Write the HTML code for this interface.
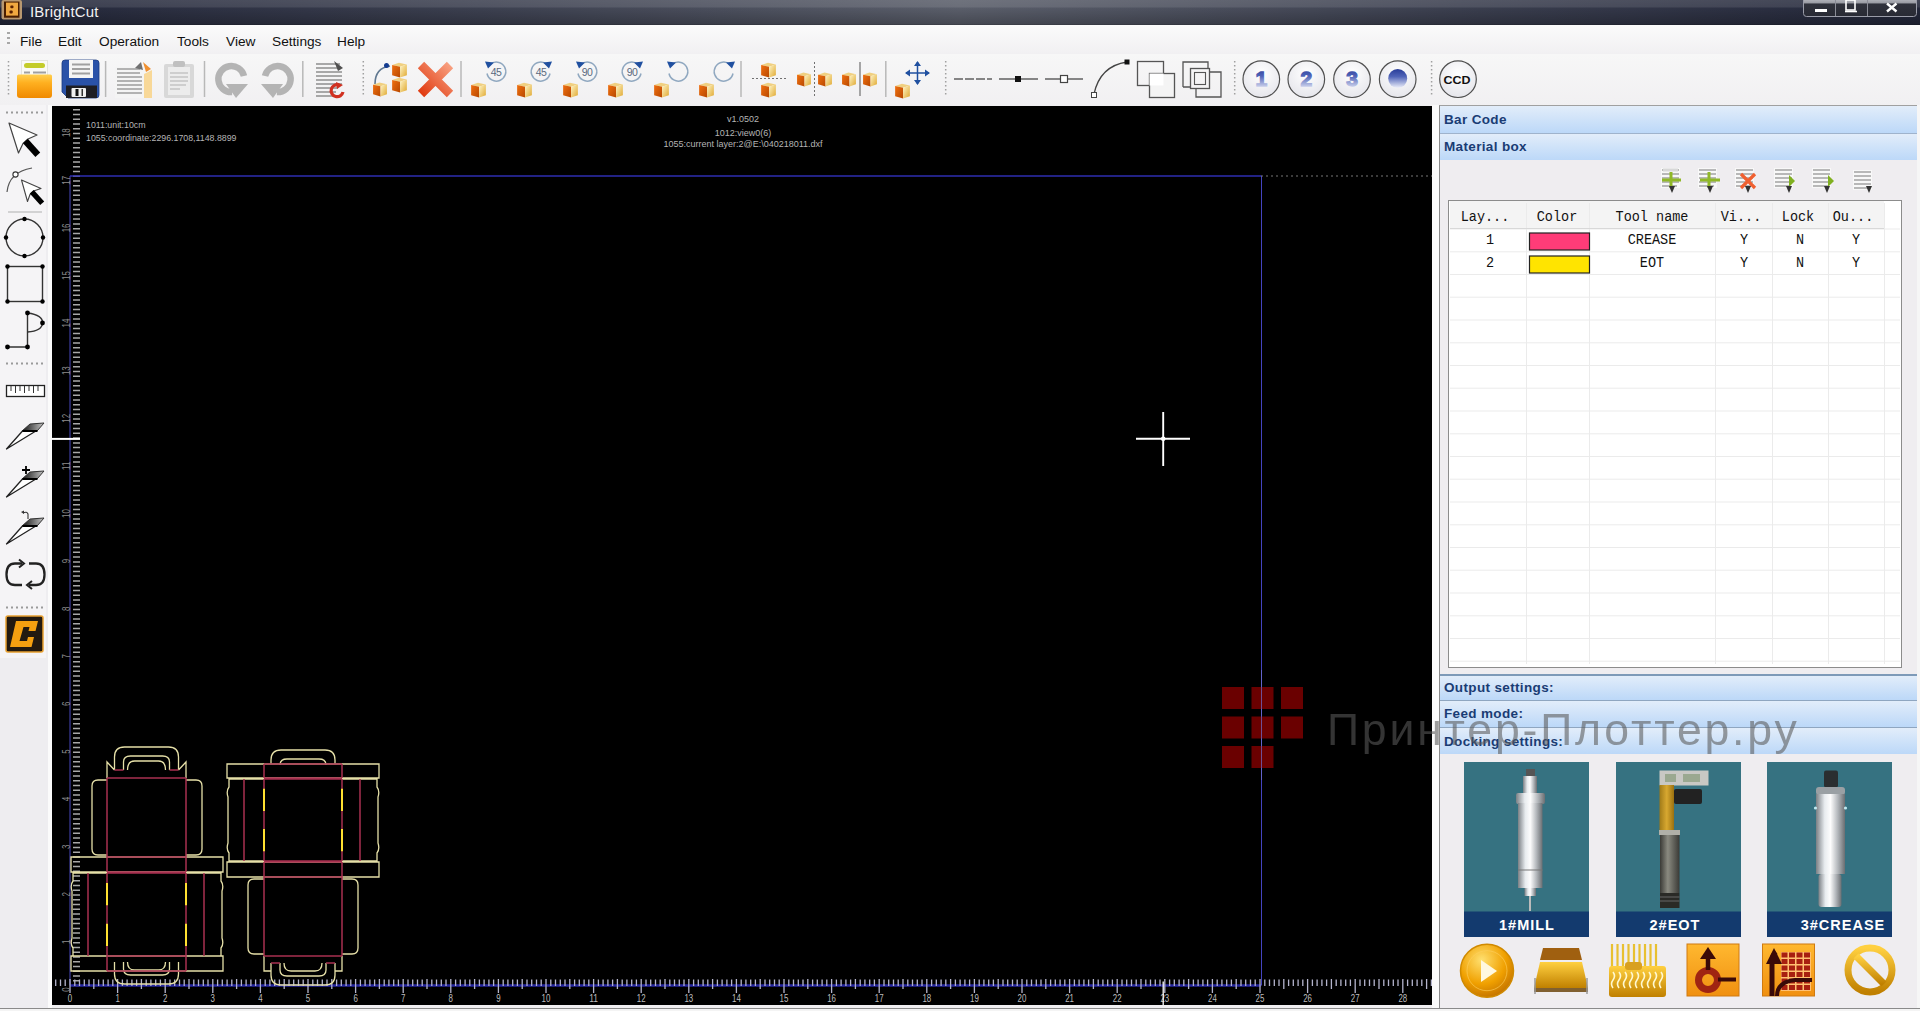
<!DOCTYPE html><html><head><meta charset="utf-8"><style>
*{box-sizing:border-box}
html,body{margin:0;padding:0;width:1920px;height:1011px;overflow:hidden;background:#f0eff1;font-family:"Liberation Sans", sans-serif}
.abs{position:absolute}
#title{left:0;top:0;width:1920px;height:25px;background:linear-gradient(rgba(255,255,255,0.13),rgba(255,255,255,0.10) 7px,rgba(0,0,0,0) 8px,rgba(0,0,0,0.22) 24px,rgba(0,0,0,0.4) 25px),linear-gradient(to right,#23273a,#3c4050 25%,#5a5e6a 50%,#3c4050 75%,#23273a)}
#menu{left:0;top:25px;width:1920px;height:29px;background:linear-gradient(#fbfbfb,#f1f0f2)}
#menu span{position:absolute;top:8.5px;font-size:13.7px;color:#111}
#tb{left:0;top:54px;width:1920px;height:51px;background:linear-gradient(#f7f7f7,#f1f0f2)}
#left{left:0;top:105px;width:48px;height:903px;background:#eeedf0}
#canvas{left:52px;top:106px;width:1380px;height:899px;background:#000}
#rp{left:1439px;top:105px;width:478px;height:903px;background:#efedf0;border-left:1px solid #8a8a8a;border-top:1px solid #a0a0a0}
.hdr{position:absolute;left:0;width:477px;background:linear-gradient(#e2edfa,#bcd8f8);font-weight:bold;color:#1a3c74;font-size:13.5px;letter-spacing:0.35px;padding-left:4px}
</style></head><body>

<div id="title" class="abs"></div>
<svg class="abs" style="left:0;top:0" width="1920" height="26" viewBox="0 0 1920 26"><defs><linearGradient id="gWb" x1="0" y1="0" x2="0" y2="1"><stop offset="0" stop-color="#c4c6cc"/><stop offset="0.3" stop-color="#9a9ca4"/><stop offset="0.36" stop-color="#30323c"/><stop offset="1" stop-color="#282a34"/></linearGradient></defs><rect x="1.5" y="0" width="20.5" height="19.5" rx="2" fill="#b89870"/><rect x="4" y="1.5" width="15.5" height="16.2" fill="#4a1e00"/><rect x="6" y="2.6" width="12" height="13" fill="#f0a840"/><rect x="10.3" y="5.5" width="3.2" height="2.8" rx="1" fill="#5a2000"/><rect x="9.5" y="10.6" width="3.2" height="2.8" rx="1" fill="#5a2000"/><text x="30" y="16.8" font-family="Liberation Sans" font-size="15" fill="#f2f2f2" letter-spacing="0.2">IBrightCut</text><rect x="1803.5" y="-3" width="113" height="19.5" rx="3" fill="url(#gWb)" stroke="#9a9ca8" stroke-width="1"/><path d="M1835.5 0V16M1867.5 0V16" stroke="#8a8c96" stroke-width="1"/><rect x="1815" y="9" width="12" height="3" fill="#fff"/><rect x="1846" y="0" width="9" height="10" fill="none" stroke="#fff" stroke-width="1.6"/><path d="M1845 11.5H1857" stroke="#fff" stroke-width="1.6"/><path d="M1887 3.5L1896.5 11.5M1896.5 3.5L1887 11.5" stroke="#fff" stroke-width="2.4"/></svg>
<div id="menu" class="abs">
<div class="abs" style="left:7px;top:7px;width:3px;height:15px;background:repeating-linear-gradient(#a8a8a8 0 2px,transparent 2px 5px)"></div>
<span style="left:20px">File</span>
<span style="left:58px">Edit</span>
<span style="left:99px">Operation</span>
<span style="left:177px">Tools</span>
<span style="left:226px">View</span>
<span style="left:272px">Settings</span>
<span style="left:337px">Help</span>
</div>
<div id="tb" class="abs"></div>
<svg class="abs" style="left:0;top:54px" width="1500" height="52" viewBox="0 54 1500 52"><defs><linearGradient id="gOr" x1="0" y1="0" x2="0" y2="1"><stop offset="0" stop-color="#ffd050"/><stop offset="0.35" stop-color="#ffb020"/><stop offset="1" stop-color="#f08a00"/></linearGradient><linearGradient id="gCubeL" x1="0" y1="0" x2="1" y2="1"><stop offset="0" stop-color="#f07010"/><stop offset="1" stop-color="#b84800"/></linearGradient><linearGradient id="gCubeR" x1="0" y1="0" x2="1" y2="1"><stop offset="0" stop-color="#fff6c8"/><stop offset="1" stop-color="#e0a830"/></linearGradient><linearGradient id="gX" x1="0" y1="1" x2="1" y2="0"><stop offset="0" stop-color="#e03a10"/><stop offset="1" stop-color="#f8a080"/></linearGradient><radialGradient id="gBtn" cx="0.5" cy="0.35" r="0.7"><stop offset="0" stop-color="#ffffff"/><stop offset="1" stop-color="#e4e4ea"/></radialGradient><linearGradient id="gNum" x1="0" y1="0" x2="0" y2="1"><stop offset="0" stop-color="#283c98"/><stop offset="0.4" stop-color="#5064b8"/><stop offset="1" stop-color="#eef0fa"/></linearGradient><symbol id="cube" viewBox="0 0 15 15"><path d="M1 3.5L7 1.5L14 3L8 5Z" fill="#f0d080"/><path d="M1 3.5L8 5V14.5L1 12.5Z" fill="url(#gCubeL)"/><path d="M8 5L14 3V12.5L8 14.5Z" fill="url(#gCubeR)"/></symbol></defs><path d="M8.5 61V97" stroke="#a0a0a0" stroke-width="1.5" stroke-dasharray="1.5 2.5"/><rect x="21.5" y="60.5" width="26" height="16" fill="#fafaf4" stroke="#e4e4dc" stroke-width="1"/><rect x="24" y="63" width="21" height="5" rx="2.5" fill="#c4cc28"/><path d="M24 72.5H30M33 72.5H46" stroke="#a0a0a0" stroke-width="1.8"/><path d="M17 76Q17 74.5 18.5 74.5H50.5Q52 74.5 52 76V95Q52 98 49 98H20Q17 98 17 95Z" fill="url(#gOr)"/><path d="M62 63Q62 60 65 60H96Q99 60 99 63V95Q99 98 96 98H68L62 92Z" fill="#2a52a8" stroke="#1a3a80" stroke-width="0.8"/><rect x="69" y="60" width="24" height="18" fill="#f4f4f4"/><path d="M72 64.5H90M72 69H90M72 73.5H90" stroke="#a0a0a0" stroke-width="1.8"/><rect x="66" y="85.5" width="31" height="12.5" fill="#1e1e24"/><rect x="71.5" y="88" width="14.5" height="9" rx="1" fill="#f0f0f0"/><rect x="75.5" y="89" width="3" height="7" fill="#111"/><rect x="81.5" y="89" width="1.5" height="7" fill="#333"/><path d="M105.6 61V97" stroke="#b8b8b8" stroke-width="1.5"/><rect x="115" y="67" width="30" height="31" fill="#f4f4f4"/><path d="M117 69H140M117 73H140M117 77H142M117 81H142M117 85H142M117 89H142M117 93H142" stroke="#9c9c9c" stroke-width="1.6"/><path d="M144 74L152 70V98H144Z" fill="#f8d898"/><path d="M135 68L141 62L143 70Z" fill="#707070"/><path d="M143 62L151 69L146 72Z" fill="#f09030"/><rect x="164" y="64" width="30" height="34" rx="2" fill="#d8d8d8"/><rect x="168" y="67" width="22" height="28" fill="#ececec"/><rect x="173" y="61" width="12" height="6" rx="2" fill="#c0c0c0"/><path d="M170 73H188M170 77H188M170 81H188M170 85H186M170 89H180" stroke="#c4c4c4" stroke-width="1.4"/><path d="M204.5 61V97" stroke="#b8b8b8" stroke-width="1.5"/><path d="M244 76A13 13 0 1 0 232 92" stroke="#b4b4b4" stroke-width="6.5" fill="none"/><path d="M226 84L248 84L236 98Z" fill="#b4b4b4"/><path d="M265 76A13 13 0 1 1 277 92" stroke="#b4b4b4" stroke-width="6.5" fill="none"/><path d="M283 84L261 84L273 98Z" fill="#b4b4b4"/><path d="M302.8 61V97" stroke="#b8b8b8" stroke-width="1.5"/><path d="M316 64H340M316 68H341M316 72H342M316 76H342M316 80H342M316 84H342M316 88H338M316 92H336M316 96H336" stroke="#8e8e8e" stroke-width="1.6"/><path d="M334 61L343 68L338 71Z" fill="#505050"/><path d="M343 92A6 6 0 1 1 339 85" stroke="#d03020" stroke-width="3.2" fill="none"/><path d="M336 82L343 85L337 89Z" fill="#d03020"/><path d="M363.3 61V97" stroke="#a0a0a0" stroke-width="1.5" stroke-dasharray="1.5 2.5"/><path d="M375 84Q375 68 390 66" stroke="#607890" stroke-width="1.6" fill="none"/><circle cx="386.5" cy="65.5" r="2.5" fill="#143c90"/><use href="#cube" x="372" y="81" width="16" height="16"/><use href="#cube" x="391" y="61" width="17" height="17"/><use href="#cube" x="391" y="76" width="17" height="17"/><path d="M421 65L450 94M450 65L421 94" stroke="url(#gX)" stroke-width="9" stroke-linecap="butt"/><path d="M461 61V97" stroke="#b8b8b8" stroke-width="1.5"/><text x="496" y="75.5" font-family="Liberation Sans" font-size="10.5" fill="#5a6a80" text-anchor="middle" letter-spacing="-0.5">45</text><path d="M490 64.5A9.5 9.5 0 1 1 487 73.5" stroke="#90a8c0" stroke-width="1.5" fill="none"/><path d="M485 61.5L494 62.5L488 68.5Z" fill="#2050a0"/><use href="#cube" x="470" y="81" width="17" height="17"/><text x="541" y="75.5" font-family="Liberation Sans" font-size="10.5" fill="#5a6a80" text-anchor="middle" letter-spacing="-0.5">45</text><path d="M547 64.5A9.5 9.5 0 1 0 550 73.5" stroke="#90a8c0" stroke-width="1.5" fill="none"/><path d="M552 61.5L543 62.5L549 68.5Z" fill="#2050a0"/><use href="#cube" x="516" y="81" width="17" height="17"/><text x="587" y="75.5" font-family="Liberation Sans" font-size="10.5" fill="#5a6a80" text-anchor="middle" letter-spacing="-0.5">90</text><path d="M581 64.5A9.5 9.5 0 1 1 578 73.5" stroke="#90a8c0" stroke-width="1.5" fill="none"/><path d="M576 61.5L585 62.5L579 68.5Z" fill="#2050a0"/><use href="#cube" x="562" y="81" width="17" height="17"/><text x="632" y="75.5" font-family="Liberation Sans" font-size="10.5" fill="#5a6a80" text-anchor="middle" letter-spacing="-0.5">90</text><path d="M638 64.5A9.5 9.5 0 1 0 641 73.5" stroke="#90a8c0" stroke-width="1.5" fill="none"/><path d="M643 61.5L634 62.5L640 68.5Z" fill="#2050a0"/><use href="#cube" x="607" y="81" width="17" height="17"/><path d="M672 64.5A9.5 9.5 0 1 1 669 73.5" stroke="#90a8c0" stroke-width="1.5" fill="none"/><path d="M667 61.5L676 62.5L670 68.5Z" fill="#2050a0"/><use href="#cube" x="653" y="81" width="17" height="17"/><path d="M730 64.5A9.5 9.5 0 1 0 733 73.5" stroke="#90a8c0" stroke-width="1.5" fill="none"/><path d="M735 61.5L726 62.5L732 68.5Z" fill="#2050a0"/><use href="#cube" x="698" y="81" width="17" height="17"/><path d="M741 61V97" stroke="#b8b8b8" stroke-width="1.5"/><use href="#cube" x="760" y="61" width="17" height="17"/><use href="#cube" x="760" y="81" width="17" height="17"/><path d="M752 78.5H786" stroke="#707070" stroke-width="1" stroke-dasharray="2 2"/><use href="#cube" x="796" y="71" width="16" height="16"/><use href="#cube" x="817" y="71" width="16" height="16"/><path d="M814.5 62V96" stroke="#707070" stroke-width="1" stroke-dasharray="2 2"/><use href="#cube" x="841" y="71" width="16" height="16"/><use href="#cube" x="862" y="71" width="16" height="16"/><path d="M860 62V96" stroke="#707070" stroke-width="1.2"/><path d="M885.8 61V97" stroke="#b8b8b8" stroke-width="1.5"/><path d="M917.5 62V84M906 73H929" stroke="#2050a0" stroke-width="1.5"/><path d="M917.5 61L914 66H921ZM917.5 85L914 80H921ZM905 73L910 69.5V76.5ZM930 73L925 69.5V76.5Z" fill="#2050a0"/><use href="#cube" x="894" y="82" width="17" height="17"/><path d="M945.7 61V97" stroke="#a0a0a0" stroke-width="1.5" stroke-dasharray="1.5 2.5"/><path d="M954 79H992" stroke="#606060" stroke-width="1.3" stroke-dasharray="9 2"/><path d="M999 79H1038" stroke="#606060" stroke-width="1.3"/><rect x="1015" y="76" width="6" height="6" fill="#111"/><path d="M1045 79H1083" stroke="#606060" stroke-width="1.3"/><rect x="1060.5" y="75.5" width="7" height="7" fill="#fff" stroke="#444" stroke-width="1.2"/><path d="M1094 94Q1100 66 1127 62" stroke="#444" stroke-width="1.3" fill="none"/><rect x="1124.5" y="59.5" width="5" height="5" fill="#111"/><rect x="1091.5" y="92.5" width="5" height="5" fill="#fff" stroke="#444"/><rect x="1137.5" y="61.5" width="26" height="24" fill="none" stroke="#555" stroke-width="1.3"/><rect x="1149.5" y="73.5" width="25" height="24" fill="#f4f4f4" stroke="#555" stroke-width="1.3"/><path d="M1149.5 73.5H1163.5V85.5H1149.5Z" fill="#ffffff"/><path d="M1183 87V62H1208V68M1183 87H1190" stroke="#555" stroke-width="1.3" fill="none"/><rect x="1190.5" y="68.5" width="19" height="20" fill="none" stroke="#555" stroke-width="1.3"/><path d="M1196 89V97H1221V72H1210" stroke="#555" stroke-width="1.3" fill="none"/><rect x="1194.5" y="72.5" width="11" height="12" fill="none" stroke="#555" stroke-width="1.1"/><path d="M1234.7 61V97" stroke="#a0a0a0" stroke-width="1.5" stroke-dasharray="1.5 2.5"/><circle cx="1261.3" cy="79.2" r="18.3" fill="url(#gBtn)" stroke="#505050" stroke-width="1.2"/><text x="1261.3" y="86" font-family="Liberation Sans" font-weight="bold" font-size="21" fill="url(#gNum)" stroke="url(#gNum)" stroke-width="1.3" text-anchor="middle">1</text><circle cx="1306.3" cy="79.2" r="18.3" fill="url(#gBtn)" stroke="#505050" stroke-width="1.2"/><text x="1306.3" y="86" font-family="Liberation Sans" font-weight="bold" font-size="21" fill="url(#gNum)" stroke="url(#gNum)" stroke-width="1.3" text-anchor="middle">2</text><circle cx="1352" cy="79.2" r="18.3" fill="url(#gBtn)" stroke="#505050" stroke-width="1.2"/><text x="1352" y="86" font-family="Liberation Sans" font-weight="bold" font-size="21" fill="url(#gNum)" stroke="url(#gNum)" stroke-width="1.3" text-anchor="middle">3</text><circle cx="1397.7" cy="79.2" r="18.3" fill="url(#gBtn)" stroke="#505050" stroke-width="1.2"/><circle cx="1397.7" cy="78.5" r="9.5" fill="url(#gNum)"/><path d="M1431.6 61V97" stroke="#a0a0a0" stroke-width="1.5" stroke-dasharray="1.5 2.5"/><circle cx="1458" cy="79.2" r="18.3" fill="url(#gBtn)" stroke="#505050" stroke-width="1.2"/><text x="1457" y="84" font-family="Liberation Sans" font-weight="bold" font-size="11" fill="#111" text-anchor="middle" textLength="27" lengthAdjust="spacingAndGlyphs">CCD</text></svg>
<div id="left" class="abs"></div>
<div class="abs" style="left:0;top:105px;width:46px;height:553px;background:#f5f4f6"></div>
<div class="abs" style="left:48px;top:105px;width:4px;height:903px;background:#fbfbfb"></div>
<svg class="abs" style="left:0;top:105px" width="52" height="560" viewBox="0 105 52 560"><defs><linearGradient id="gKn" x1="0" y1="0" x2="1" y2="0"><stop offset="0" stop-color="#111"/><stop offset="1" stop-color="#c8c8c8"/></linearGradient></defs><path d="M6 112.5H43" stroke="#9a9a9a" stroke-width="2" stroke-dasharray="2 3"/><path d="M9 123L37 135L28 139L23 143.5L18.5 153Z" fill="#fff" stroke="#444" stroke-width="1.2" stroke-linejoin="round"/><path d="M27.8 138.8L40.2 152.6L35.4 157L23 143.2Z" fill="#000"/><path d="M7 192Q9 172 32 168" stroke="#555" stroke-width="1.2" fill="none"/><circle cx="15.5" cy="174.5" r="2.6" fill="#fff" stroke="#333" stroke-width="1.1"/><path d="M21.5 180L41 188.5L33.5 191L30 194.5L27.5 201.5Z" fill="#fff" stroke="#444" stroke-width="1.1" stroke-linejoin="round"/><path d="M33.8 190L44.2 201.4L40.2 205L29.8 193.6Z" fill="#000"/><path d="M8 212H42" stroke="#b0b0b0" stroke-width="1.2"/><circle cx="24.5" cy="237.5" r="18.5" fill="none" stroke="#333" stroke-width="1.4"/><circle cx="24.5" cy="219" r="2.2" fill="#000"/><circle cx="24.5" cy="256" r="2.2" fill="#000"/><circle cx="6" cy="237.5" r="2.2" fill="#000"/><circle cx="43" cy="237.5" r="2.2" fill="#000"/><rect x="7.5" y="266.5" width="35" height="35" fill="none" stroke="#333" stroke-width="1.4"/><circle cx="7.5" cy="266.5" r="2.2" fill="#000"/><circle cx="42.5" cy="266.5" r="2.2" fill="#000"/><circle cx="7.5" cy="301.5" r="2.2" fill="#000"/><circle cx="42.5" cy="301.5" r="2.2" fill="#000"/><path d="M27.5 313V347H7.5" stroke="#333" stroke-width="1.4" fill="none"/><path d="M27.5 313Q43 315 42.5 323Q42 331 27.5 332" stroke="#333" stroke-width="1.4" fill="none"/><circle cx="27.5" cy="313" r="2.4" fill="#000"/><circle cx="42.5" cy="323" r="2.4" fill="#000"/><circle cx="27.5" cy="347" r="2.4" fill="#000"/><circle cx="7.5" cy="347" r="2.4" fill="#000"/><path d="M6 363.5H43" stroke="#9a9a9a" stroke-width="2" stroke-dasharray="2 3"/><rect x="6.5" y="385.5" width="38" height="11" fill="#fff" stroke="#222" stroke-width="1.3"/><path d="M11 386V391M15.5 386V393M20 386V391M24.5 386V393M29 386V391M33.5 386V393M38 386V391" stroke="#333" stroke-width="1"/><g transform="translate(0 0)"><path d="M6.5 449L22.5 431L37.5 430Z" fill="#fff" stroke="#222" stroke-width="1.3" stroke-linejoin="round"/><path d="M22 431L30 424L44 423L37.5 430.5Z" fill="url(#gKn)" stroke="#333" stroke-width="1"/><path d="M22.5 431H37.5" stroke="#000" stroke-width="2"/></g><g transform="translate(0 48)"><path d="M6.5 449L22.5 431L37.5 430Z" fill="#fff" stroke="#222" stroke-width="1.3" stroke-linejoin="round"/><path d="M22 431L30 424L44 423L37.5 430.5Z" fill="url(#gKn)" stroke="#333" stroke-width="1"/><path d="M22.5 431H37.5" stroke="#000" stroke-width="2"/><path d="M26 418V426M22 422H30" stroke="#000" stroke-width="1.8"/></g><g transform="translate(0 95)"><path d="M6.5 449L22.5 431L37.5 430Z" fill="#fff" stroke="#222" stroke-width="1.3" stroke-linejoin="round"/><path d="M22 431L30 424L44 423L37.5 430.5Z" fill="url(#gKn)" stroke="#333" stroke-width="1"/><path d="M22.5 431H37.5" stroke="#000" stroke-width="2"/><path d="M23 418Q27 416 28 419V424" stroke="#333" stroke-width="1.1" fill="none"/><path d="M21 417L24 415.5L24 419Z" fill="#333"/></g><path d="M22 563.5H15Q6.5 563.5 6.5 574.5Q6.5 585 15 585H22" stroke="#222" stroke-width="2.3" fill="none"/><path d="M29 563.5H36Q44.5 563.5 44.5 574.5Q44.5 585 36 585H29" stroke="#222" stroke-width="2.3" fill="none"/><path d="M19 559.5L24 563.5L19 567.5" stroke="#222" stroke-width="2" fill="none"/><path d="M32 581L27 585L32 589" stroke="#222" stroke-width="2" fill="none"/><path d="M6 607.5H43" stroke="#9a9a9a" stroke-width="2" stroke-dasharray="2 3"/><rect x="6" y="616" width="37" height="36" rx="2" fill="#231a10" stroke="#e8a030" stroke-width="1.5"/><path d="M16 621H38L35.5 631H28.5L29.5 627H23.5L19.5 641H27L28 637H34L31.5 647H10Z" fill="#f5a010"/></svg>
<svg class="abs" style="left:52px;top:106px" width="1380" height="899" viewBox="52 106 1380 899"><rect x="52" y="106" width="1380" height="899" fill="#000"/><path d="M73 985.5H80 M73 980.7H80 M73 976.0H80 M73 971.2H80 M73 966.5H80 M73 961.7H80 M73 956.9H80 M73 952.2H80 M73 947.4H80 M73 942.7H80 M73 937.9H80 M73 933.1H80 M73 928.4H80 M73 923.6H80 M73 918.9H80 M73 914.1H80 M73 909.3H80 M73 904.6H80 M73 899.8H80 M73 895.1H80 M73 890.3H80 M73 885.5H80 M73 880.8H80 M73 876.0H80 M73 871.3H80 M73 866.5H80 M73 861.7H80 M73 857.0H80 M73 852.2H80 M73 847.5H80 M73 842.7H80 M73 837.9H80 M73 833.2H80 M73 828.4H80 M73 823.7H80 M73 818.9H80 M73 814.1H80 M73 809.4H80 M73 804.6H80 M73 799.9H80 M73 795.1H80 M73 790.3H80 M73 785.6H80 M73 780.8H80 M73 776.1H80 M73 771.3H80 M73 766.5H80 M73 761.8H80 M73 757.0H80 M73 752.3H80 M73 747.5H80 M73 742.7H80 M73 738.0H80 M73 733.2H80 M73 728.5H80 M73 723.7H80 M73 718.9H80 M73 714.2H80 M73 709.4H80 M73 704.7H80 M73 699.9H80 M73 695.1H80 M73 690.4H80 M73 685.6H80 M73 680.9H80 M73 676.1H80 M73 671.3H80 M73 666.6H80 M73 661.8H80 M73 657.1H80 M73 652.3H80 M73 647.5H80 M73 642.8H80 M73 638.0H80 M73 633.3H80 M73 628.5H80 M73 623.7H80 M73 619.0H80 M73 614.2H80 M73 609.5H80 M73 604.7H80 M73 599.9H80 M73 595.2H80 M73 590.4H80 M73 585.7H80 M73 580.9H80 M73 576.1H80 M73 571.4H80 M73 566.6H80 M73 561.9H80 M73 557.1H80 M73 552.3H80 M73 547.6H80 M73 542.8H80 M73 538.1H80 M73 533.3H80 M73 528.5H80 M73 523.8H80 M73 519.0H80 M73 514.3H80 M73 509.5H80 M73 504.7H80 M73 500.0H80 M73 495.2H80 M73 490.5H80 M73 485.7H80 M73 480.9H80 M73 476.2H80 M73 471.4H80 M73 466.7H80 M73 461.9H80 M73 457.1H80 M73 452.4H80 M73 447.6H80 M73 442.9H80 M73 438.1H80 M73 433.3H80 M73 428.6H80 M73 423.8H80 M73 419.1H80 M73 414.3H80 M73 409.5H80 M73 404.8H80 M73 400.0H80 M73 395.3H80 M73 390.5H80 M73 385.7H80 M73 381.0H80 M73 376.2H80 M73 371.5H80 M73 366.7H80 M73 361.9H80 M73 357.2H80 M73 352.4H80 M73 347.7H80 M73 342.9H80 M73 338.1H80 M73 333.4H80 M73 328.6H80 M73 323.9H80 M73 319.1H80 M73 314.3H80 M73 309.6H80 M73 304.8H80 M73 300.1H80 M73 295.3H80 M73 290.5H80 M73 285.8H80 M73 281.0H80 M73 276.3H80 M73 271.5H80 M73 266.7H80 M73 262.0H80 M73 257.2H80 M73 252.5H80 M73 247.7H80 M73 242.9H80 M73 238.2H80 M73 233.4H80 M73 228.7H80 M73 223.9H80 M73 219.1H80 M73 214.4H80 M73 209.6H80 M73 204.9H80 M73 200.1H80 M73 195.3H80 M73 190.6H80 M73 185.8H80 M73 181.1H80 M73 176.3H80 M73 171.5H80 M73 166.8H80 M73 162.0H80 M73 157.3H80 M73 152.5H80 M73 147.7H80 M73 143.0H80 M73 138.2H80 M73 133.5H80 M73 128.7H80 M73 123.9H80 M73 119.2H80 M73 114.4H80 M73 109.7H80" stroke="#a8a8a8" stroke-width="1.5"/><path d="M70.0 176V985.5" stroke="#23235e" stroke-width="2"/><path d="M70.0 985.5H1261" stroke="#2626a0" stroke-width="2.6"/><path d="M51.0 979.5V986 M55.7 979.5V986 M60.5 979.5V986 M65.2 979.5V986 M70.0 979V993 M74.8 979.5V986 M79.5 979.5V986 M84.3 979.5V986 M89.0 979.5V986 M93.8 979V989 M98.6 979.5V986 M103.3 979.5V986 M108.1 979.5V986 M112.8 979.5V986 M117.6 979V993 M122.4 979.5V986 M127.1 979.5V986 M131.9 979.5V986 M136.6 979.5V986 M141.4 979V989 M146.2 979.5V986 M150.9 979.5V986 M155.7 979.5V986 M160.4 979.5V986 M165.2 979V993 M170.0 979.5V986 M174.7 979.5V986 M179.5 979.5V986 M184.2 979.5V986 M189.0 979V989 M193.8 979.5V986 M198.5 979.5V986 M203.3 979.5V986 M208.0 979.5V986 M212.8 979V993 M217.6 979.5V986 M222.3 979.5V986 M227.1 979.5V986 M231.8 979.5V986 M236.6 979V989 M241.4 979.5V986 M246.1 979.5V986 M250.9 979.5V986 M255.6 979.5V986 M260.4 979V993 M265.2 979.5V986 M269.9 979.5V986 M274.7 979.5V986 M279.4 979.5V986 M284.2 979V989 M289.0 979.5V986 M293.7 979.5V986 M298.5 979.5V986 M303.2 979.5V986 M308.0 979V993 M312.8 979.5V986 M317.5 979.5V986 M322.3 979.5V986 M327.0 979.5V986 M331.8 979V989 M336.6 979.5V986 M341.3 979.5V986 M346.1 979.5V986 M350.8 979.5V986 M355.6 979V993 M360.4 979.5V986 M365.1 979.5V986 M369.9 979.5V986 M374.6 979.5V986 M379.4 979V989 M384.2 979.5V986 M388.9 979.5V986 M393.7 979.5V986 M398.4 979.5V986 M403.2 979V993 M408.0 979.5V986 M412.7 979.5V986 M417.5 979.5V986 M422.2 979.5V986 M427.0 979V989 M431.8 979.5V986 M436.5 979.5V986 M441.3 979.5V986 M446.0 979.5V986 M450.8 979V993 M455.6 979.5V986 M460.3 979.5V986 M465.1 979.5V986 M469.8 979.5V986 M474.6 979V989 M479.4 979.5V986 M484.1 979.5V986 M488.9 979.5V986 M493.6 979.5V986 M498.4 979V993 M503.2 979.5V986 M507.9 979.5V986 M512.7 979.5V986 M517.4 979.5V986 M522.2 979V989 M527.0 979.5V986 M531.7 979.5V986 M536.5 979.5V986 M541.2 979.5V986 M546.0 979V993 M550.8 979.5V986 M555.5 979.5V986 M560.3 979.5V986 M565.0 979.5V986 M569.8 979V989 M574.6 979.5V986 M579.3 979.5V986 M584.1 979.5V986 M588.8 979.5V986 M593.6 979V993 M598.4 979.5V986 M603.1 979.5V986 M607.9 979.5V986 M612.6 979.5V986 M617.4 979V989 M622.2 979.5V986 M626.9 979.5V986 M631.7 979.5V986 M636.4 979.5V986 M641.2 979V993 M646.0 979.5V986 M650.7 979.5V986 M655.5 979.5V986 M660.2 979.5V986 M665.0 979V989 M669.8 979.5V986 M674.5 979.5V986 M679.3 979.5V986 M684.0 979.5V986 M688.8 979V993 M693.6 979.5V986 M698.3 979.5V986 M703.1 979.5V986 M707.8 979.5V986 M712.6 979V989 M717.4 979.5V986 M722.1 979.5V986 M726.9 979.5V986 M731.6 979.5V986 M736.4 979V993 M741.2 979.5V986 M745.9 979.5V986 M750.7 979.5V986 M755.4 979.5V986 M760.2 979V989 M765.0 979.5V986 M769.7 979.5V986 M774.5 979.5V986 M779.2 979.5V986 M784.0 979V993 M788.8 979.5V986 M793.5 979.5V986 M798.3 979.5V986 M803.0 979.5V986 M807.8 979V989 M812.6 979.5V986 M817.3 979.5V986 M822.1 979.5V986 M826.8 979.5V986 M831.6 979V993 M836.4 979.5V986 M841.1 979.5V986 M845.9 979.5V986 M850.6 979.5V986 M855.4 979V989 M860.2 979.5V986 M864.9 979.5V986 M869.7 979.5V986 M874.4 979.5V986 M879.2 979V993 M884.0 979.5V986 M888.7 979.5V986 M893.5 979.5V986 M898.2 979.5V986 M903.0 979V989 M907.8 979.5V986 M912.5 979.5V986 M917.3 979.5V986 M922.0 979.5V986 M926.8 979V993 M931.6 979.5V986 M936.3 979.5V986 M941.1 979.5V986 M945.8 979.5V986 M950.6 979V989 M955.4 979.5V986 M960.1 979.5V986 M964.9 979.5V986 M969.6 979.5V986 M974.4 979V993 M979.2 979.5V986 M983.9 979.5V986 M988.7 979.5V986 M993.4 979.5V986 M998.2 979V989 M1003.0 979.5V986 M1007.7 979.5V986 M1012.5 979.5V986 M1017.2 979.5V986 M1022.0 979V993 M1026.8 979.5V986 M1031.5 979.5V986 M1036.3 979.5V986 M1041.0 979.5V986 M1045.8 979V989 M1050.6 979.5V986 M1055.3 979.5V986 M1060.1 979.5V986 M1064.8 979.5V986 M1069.6 979V993 M1074.4 979.5V986 M1079.1 979.5V986 M1083.9 979.5V986 M1088.6 979.5V986 M1093.4 979V989 M1098.2 979.5V986 M1102.9 979.5V986 M1107.7 979.5V986 M1112.4 979.5V986 M1117.2 979V993 M1122.0 979.5V986 M1126.7 979.5V986 M1131.5 979.5V986 M1136.2 979.5V986 M1141.0 979V989 M1145.8 979.5V986 M1150.5 979.5V986 M1155.3 979.5V986 M1160.0 979.5V986 M1164.8 979V993 M1169.6 979.5V986 M1174.3 979.5V986 M1179.1 979.5V986 M1183.8 979.5V986 M1188.6 979V989 M1193.4 979.5V986 M1198.1 979.5V986 M1202.9 979.5V986 M1207.6 979.5V986 M1212.4 979V993 M1217.2 979.5V986 M1221.9 979.5V986 M1226.7 979.5V986 M1231.4 979.5V986 M1236.2 979V989 M1241.0 979.5V986 M1245.7 979.5V986 M1250.5 979.5V986 M1255.2 979.5V986 M1260.0 979V993 M1264.8 979.5V986 M1269.5 979.5V986 M1274.3 979.5V986 M1279.0 979.5V986 M1283.8 979V989 M1288.6 979.5V986 M1293.3 979.5V986 M1298.1 979.5V986 M1302.8 979.5V986 M1307.6 979V993 M1312.4 979.5V986 M1317.1 979.5V986 M1321.9 979.5V986 M1326.6 979.5V986 M1331.4 979V989 M1336.2 979.5V986 M1340.9 979.5V986 M1345.7 979.5V986 M1350.4 979.5V986 M1355.2 979V993 M1360.0 979.5V986 M1364.7 979.5V986 M1369.5 979.5V986 M1374.2 979.5V986 M1379.0 979V989 M1383.8 979.5V986 M1388.5 979.5V986 M1393.3 979.5V986 M1398.0 979.5V986 M1402.8 979V993 M1407.6 979.5V986 M1412.3 979.5V986 M1417.1 979.5V986 M1421.8 979.5V986 M1426.6 979V989 M1431.4 979.5V986" stroke="#b4b4cc" stroke-width="1.3"/><text x="70.0" y="1002" font-size="10.3" fill="#bcbcbc" text-anchor="middle" font-family="Liberation Sans" textLength="4.4" lengthAdjust="spacingAndGlyphs">0</text><text x="117.6" y="1002" font-size="10.3" fill="#bcbcbc" text-anchor="middle" font-family="Liberation Sans" textLength="4.4" lengthAdjust="spacingAndGlyphs">1</text><text x="165.2" y="1002" font-size="10.3" fill="#bcbcbc" text-anchor="middle" font-family="Liberation Sans" textLength="4.4" lengthAdjust="spacingAndGlyphs">2</text><text x="212.8" y="1002" font-size="10.3" fill="#bcbcbc" text-anchor="middle" font-family="Liberation Sans" textLength="4.4" lengthAdjust="spacingAndGlyphs">3</text><text x="260.4" y="1002" font-size="10.3" fill="#bcbcbc" text-anchor="middle" font-family="Liberation Sans" textLength="4.4" lengthAdjust="spacingAndGlyphs">4</text><text x="308.0" y="1002" font-size="10.3" fill="#bcbcbc" text-anchor="middle" font-family="Liberation Sans" textLength="4.4" lengthAdjust="spacingAndGlyphs">5</text><text x="355.6" y="1002" font-size="10.3" fill="#bcbcbc" text-anchor="middle" font-family="Liberation Sans" textLength="4.4" lengthAdjust="spacingAndGlyphs">6</text><text x="403.2" y="1002" font-size="10.3" fill="#bcbcbc" text-anchor="middle" font-family="Liberation Sans" textLength="4.4" lengthAdjust="spacingAndGlyphs">7</text><text x="450.8" y="1002" font-size="10.3" fill="#bcbcbc" text-anchor="middle" font-family="Liberation Sans" textLength="4.4" lengthAdjust="spacingAndGlyphs">8</text><text x="498.4" y="1002" font-size="10.3" fill="#bcbcbc" text-anchor="middle" font-family="Liberation Sans" textLength="4.4" lengthAdjust="spacingAndGlyphs">9</text><text x="546.0" y="1002" font-size="10.3" fill="#bcbcbc" text-anchor="middle" font-family="Liberation Sans" textLength="8.8" lengthAdjust="spacingAndGlyphs">10</text><text x="593.6" y="1002" font-size="10.3" fill="#bcbcbc" text-anchor="middle" font-family="Liberation Sans" textLength="8.8" lengthAdjust="spacingAndGlyphs">11</text><text x="641.2" y="1002" font-size="10.3" fill="#bcbcbc" text-anchor="middle" font-family="Liberation Sans" textLength="8.8" lengthAdjust="spacingAndGlyphs">12</text><text x="688.8" y="1002" font-size="10.3" fill="#bcbcbc" text-anchor="middle" font-family="Liberation Sans" textLength="8.8" lengthAdjust="spacingAndGlyphs">13</text><text x="736.4" y="1002" font-size="10.3" fill="#bcbcbc" text-anchor="middle" font-family="Liberation Sans" textLength="8.8" lengthAdjust="spacingAndGlyphs">14</text><text x="784.0" y="1002" font-size="10.3" fill="#bcbcbc" text-anchor="middle" font-family="Liberation Sans" textLength="8.8" lengthAdjust="spacingAndGlyphs">15</text><text x="831.6" y="1002" font-size="10.3" fill="#bcbcbc" text-anchor="middle" font-family="Liberation Sans" textLength="8.8" lengthAdjust="spacingAndGlyphs">16</text><text x="879.2" y="1002" font-size="10.3" fill="#bcbcbc" text-anchor="middle" font-family="Liberation Sans" textLength="8.8" lengthAdjust="spacingAndGlyphs">17</text><text x="926.8" y="1002" font-size="10.3" fill="#bcbcbc" text-anchor="middle" font-family="Liberation Sans" textLength="8.8" lengthAdjust="spacingAndGlyphs">18</text><text x="974.4" y="1002" font-size="10.3" fill="#bcbcbc" text-anchor="middle" font-family="Liberation Sans" textLength="8.8" lengthAdjust="spacingAndGlyphs">19</text><text x="1022.0" y="1002" font-size="10.3" fill="#bcbcbc" text-anchor="middle" font-family="Liberation Sans" textLength="8.8" lengthAdjust="spacingAndGlyphs">20</text><text x="1069.6" y="1002" font-size="10.3" fill="#bcbcbc" text-anchor="middle" font-family="Liberation Sans" textLength="8.8" lengthAdjust="spacingAndGlyphs">21</text><text x="1117.2" y="1002" font-size="10.3" fill="#bcbcbc" text-anchor="middle" font-family="Liberation Sans" textLength="8.8" lengthAdjust="spacingAndGlyphs">22</text><text x="1164.8" y="1002" font-size="10.3" fill="#bcbcbc" text-anchor="middle" font-family="Liberation Sans" textLength="8.8" lengthAdjust="spacingAndGlyphs">23</text><text x="1212.4" y="1002" font-size="10.3" fill="#bcbcbc" text-anchor="middle" font-family="Liberation Sans" textLength="8.8" lengthAdjust="spacingAndGlyphs">24</text><text x="1260.0" y="1002" font-size="10.3" fill="#bcbcbc" text-anchor="middle" font-family="Liberation Sans" textLength="8.8" lengthAdjust="spacingAndGlyphs">25</text><text x="1307.6" y="1002" font-size="10.3" fill="#bcbcbc" text-anchor="middle" font-family="Liberation Sans" textLength="8.8" lengthAdjust="spacingAndGlyphs">26</text><text x="1355.2" y="1002" font-size="10.3" fill="#bcbcbc" text-anchor="middle" font-family="Liberation Sans" textLength="8.8" lengthAdjust="spacingAndGlyphs">27</text><text x="1402.8" y="1002" font-size="10.3" fill="#bcbcbc" text-anchor="middle" font-family="Liberation Sans" textLength="8.8" lengthAdjust="spacingAndGlyphs">28</text><text transform="translate(69.5 989.5) rotate(-90)" x="0" y="0" font-size="10" fill="#8c8c8c" text-anchor="middle" font-family="Liberation Sans" textLength="4.4" lengthAdjust="spacingAndGlyphs">0</text><text transform="translate(69.5 941.9) rotate(-90)" x="0" y="0" font-size="10" fill="#8c8c8c" text-anchor="middle" font-family="Liberation Sans" textLength="4.4" lengthAdjust="spacingAndGlyphs">1</text><text transform="translate(69.5 894.3) rotate(-90)" x="0" y="0" font-size="10" fill="#8c8c8c" text-anchor="middle" font-family="Liberation Sans" textLength="4.4" lengthAdjust="spacingAndGlyphs">2</text><text transform="translate(69.5 846.7) rotate(-90)" x="0" y="0" font-size="10" fill="#8c8c8c" text-anchor="middle" font-family="Liberation Sans" textLength="4.4" lengthAdjust="spacingAndGlyphs">3</text><text transform="translate(69.5 799.1) rotate(-90)" x="0" y="0" font-size="10" fill="#8c8c8c" text-anchor="middle" font-family="Liberation Sans" textLength="4.4" lengthAdjust="spacingAndGlyphs">4</text><text transform="translate(69.5 751.5) rotate(-90)" x="0" y="0" font-size="10" fill="#8c8c8c" text-anchor="middle" font-family="Liberation Sans" textLength="4.4" lengthAdjust="spacingAndGlyphs">5</text><text transform="translate(69.5 703.9) rotate(-90)" x="0" y="0" font-size="10" fill="#8c8c8c" text-anchor="middle" font-family="Liberation Sans" textLength="4.4" lengthAdjust="spacingAndGlyphs">6</text><text transform="translate(69.5 656.3) rotate(-90)" x="0" y="0" font-size="10" fill="#8c8c8c" text-anchor="middle" font-family="Liberation Sans" textLength="4.4" lengthAdjust="spacingAndGlyphs">7</text><text transform="translate(69.5 608.7) rotate(-90)" x="0" y="0" font-size="10" fill="#8c8c8c" text-anchor="middle" font-family="Liberation Sans" textLength="4.4" lengthAdjust="spacingAndGlyphs">8</text><text transform="translate(69.5 561.1) rotate(-90)" x="0" y="0" font-size="10" fill="#8c8c8c" text-anchor="middle" font-family="Liberation Sans" textLength="4.4" lengthAdjust="spacingAndGlyphs">9</text><text transform="translate(69.5 513.5) rotate(-90)" x="0" y="0" font-size="10" fill="#8c8c8c" text-anchor="middle" font-family="Liberation Sans" textLength="8.8" lengthAdjust="spacingAndGlyphs">10</text><text transform="translate(69.5 465.9) rotate(-90)" x="0" y="0" font-size="10" fill="#8c8c8c" text-anchor="middle" font-family="Liberation Sans" textLength="8.8" lengthAdjust="spacingAndGlyphs">11</text><text transform="translate(69.5 418.3) rotate(-90)" x="0" y="0" font-size="10" fill="#8c8c8c" text-anchor="middle" font-family="Liberation Sans" textLength="8.8" lengthAdjust="spacingAndGlyphs">12</text><text transform="translate(69.5 370.7) rotate(-90)" x="0" y="0" font-size="10" fill="#8c8c8c" text-anchor="middle" font-family="Liberation Sans" textLength="8.8" lengthAdjust="spacingAndGlyphs">13</text><text transform="translate(69.5 323.1) rotate(-90)" x="0" y="0" font-size="10" fill="#8c8c8c" text-anchor="middle" font-family="Liberation Sans" textLength="8.8" lengthAdjust="spacingAndGlyphs">14</text><text transform="translate(69.5 275.5) rotate(-90)" x="0" y="0" font-size="10" fill="#8c8c8c" text-anchor="middle" font-family="Liberation Sans" textLength="8.8" lengthAdjust="spacingAndGlyphs">15</text><text transform="translate(69.5 227.9) rotate(-90)" x="0" y="0" font-size="10" fill="#8c8c8c" text-anchor="middle" font-family="Liberation Sans" textLength="8.8" lengthAdjust="spacingAndGlyphs">16</text><text transform="translate(69.5 180.3) rotate(-90)" x="0" y="0" font-size="10" fill="#8c8c8c" text-anchor="middle" font-family="Liberation Sans" textLength="8.8" lengthAdjust="spacingAndGlyphs">17</text><text transform="translate(69.5 132.7) rotate(-90)" x="0" y="0" font-size="10" fill="#8c8c8c" text-anchor="middle" font-family="Liberation Sans" textLength="8.8" lengthAdjust="spacingAndGlyphs">18</text><path d="M70.0 176H1261.5" stroke="#2e2eb0" stroke-width="1.6" fill="none"/><path d="M1261.5 176V985.5" stroke="#4444c0" stroke-width="1" fill="none"/><path d="M1261 176H1432" stroke="#777" stroke-width="1" stroke-dasharray="2 3" fill="none"/><path d="M1136 438.8H1190M1163.2 412V466" stroke="#fff" stroke-width="1.9"/><circle cx="1163.2" cy="438.8" r="2.3" fill="#fff"/><path d="M52 438.9H80" stroke="#fff" stroke-width="2"/><path d="M1163.2 981.5V1005" stroke="#fff" stroke-width="1.3"/><text x="86" y="128" font-size="8.8" fill="#b4b4b4" font-family="Liberation Sans">1011:unit:10cm</text><text x="86" y="140.5" font-size="8.8" fill="#b4b4b4" font-family="Liberation Sans">1055:coordinate:2296.1708,1148.8899</text><text x="743" y="122.2" font-size="9" fill="#b4b4b4" text-anchor="middle" font-family="Liberation Sans">v1.0502</text><text x="743" y="136.3" font-size="9" fill="#b4b4b4" text-anchor="middle" font-family="Liberation Sans">1012:view0(6)</text><text x="743" y="147.2" font-size="9" fill="#b4b4b4" text-anchor="middle" font-family="Liberation Sans">1055:current layer:2@E:\040218011.dxf</text><g transform="translate(0 1924) scale(1 -1)"><path d="M114.5 962V950Q114.5 940 124.5 940H168.5Q178.5 940 178.5 950V962 M123.5 962V955Q123.5 949 130.5 949H162.5Q169.5 949 169.5 955V962 M127.5 962Q127.5 954 134.5 954H158.5Q165.5 954 165.5 962" stroke="#e6e0a8" stroke-width="1.3" fill="none"/><path d="" stroke="#a83050" stroke-width="1.5" fill="none"/></g><path d="M107 778V762L114.5 770M186 778V762L178.5 770 M114.5 770V757Q114.5 747 124.5 747H168.5Q178.5 747 178.5 757V770 M123.5 770V762Q123.5 756 130.5 756H162.5Q169.5 756 169.5 762V770 M127.5 770Q127.5 761 134.5 761H158.5Q165.5 761 165.5 770 M107 780H98Q92 780 92 786V849Q92 855 98 855H107 M186 780H196Q202 780 202 786V849Q202 855 196 855H186 M71 857H223V872H71Z M107 873H73V881Q70 885 72 891V938Q70 944 73 948V956H107 M186 873H221V881Q224 885 222 891V938Q224 944 221 948V956H186 M71 956H223V971H71Z" stroke="#e6e0a8" stroke-width="1.3" fill="none"/><path d="M114.5 770H123.5M169.5 770H178.5 M107 778V857M186 778V857M107 778H186M107 857H186 M107 857H186M107 872H186M107 857V872M186 857V872 M107 873H186M107 956H186M88 873V956M204 873V956M107 873V956M186 873V956 M107 956H186M107 971H186M107 956V971M186 956V971" stroke="#a83050" stroke-width="1.5" fill="none"/><path d="M107 882.96V905.37M107 923.63V946.04M186 882.96V905.37M186 923.63V946.04" stroke="#ffe030" stroke-width="2" fill="none"/><g transform="translate(0 1912) scale(1 -1)"><path d="M264 956V941H271.0M342 956V941H335.0 M271.0 949V937Q271.0 927 281.0 927H325.0Q335.0 927 335.0 937V949 M280.0 949V942Q280.0 936 287.0 936H319.0Q326.0 936 326.0 942V949 M284.0 949Q284.0 941 291.0 941H315.0Q322.0 941 322.0 949" stroke="#e6e0a8" stroke-width="1.3" fill="none"/><path d="M271.0 949H280.0M326.0 949H335.0" stroke="#a83050" stroke-width="1.5" fill="none"/></g><path d="M271.0 764V760Q271.0 750 281.0 750H325.0Q335.0 750 335.0 760V764 M280.0 764V765Q280.0 759 287.0 759H319.0Q326.0 759 326.0 765V764 M284.0 764Q284.0 764 291.0 764H315.0Q322.0 764 322.0 764 M227 764H379V778H227Z M264 779H229V787Q226 791 228 797V843Q226 849 229 853V861H264 M342 779H377V787Q380 791 378 797V843Q380 849 377 853V861H342 M227 862H379V877H227Z M264 879H254Q248 879 248 885V948Q248 954 254 954H264 M342 879H352Q358 879 358 885V948Q358 954 352 954H342" stroke="#e6e0a8" stroke-width="1.3" fill="none"/><path d=" M264 764H342M264 778H342M264 764V778M342 764V778 M264 779H342M264 861H342M244 779V861M360 779V861M264 779V861M342 779V861 M264 862H342M264 877H342M264 862V877M342 862V877 M264 877V956M342 877V956M264 877H342M264 956H342" stroke="#a83050" stroke-width="1.5" fill="none"/><path d="M264 788.84V810.98M264 829.02V851.16M342 788.84V810.98M342 829.02V851.16" stroke="#ffe030" stroke-width="2" fill="none"/></svg>
<div class="abs" style="left:1432px;top:105px;width:7px;height:903px;background:#fafafa"></div>
<div id="rp" class="abs">
<div class="hdr" style="top:0;height:28px;line-height:28px;border-bottom:1px solid #9fb3cc">Bar Code</div>
<div class="hdr" style="top:28px;height:26px;line-height:25px">Material box</div>
<div class="hdr" style="top:568px;height:27px;line-height:24px;border-top:2px solid #7e9ab8;border-bottom:1px solid #8fa6c0">Output settings:</div>
<div class="hdr" style="top:595px;height:27px;line-height:25px;border-bottom:1px solid #8fa6c0">Feed mode:</div>
<div class="hdr" style="top:622px;height:26px;line-height:27px">Docking settings:</div>
</div>
<div class="abs" style="left:1448px;top:200px;width:454px;height:468px;background:#fff;border:1px solid #8c8c8c"></div>
<svg class="abs" style="left:1448px;top:200px" width="454" height="468" viewBox="1448 200 454 468"><rect x="1450" y="201" width="434" height="27" fill="#f4f4f4"/><path d="M1526.5 203V664 M1589.5 203V664 M1715.5 203V664 M1772.5 203V664 M1828.5 203V664 M1884.5 203V664 M1450 229.0H1900 M1450 251.8H1900 M1450 274.5H1900 M1450 297.2H1900 M1450 320.0H1900 M1450 342.8H1900 M1450 365.5H1900 M1450 388.2H1900 M1450 411.0H1900 M1450 433.8H1900 M1450 456.5H1900 M1450 479.2H1900 M1450 502.0H1900 M1450 524.8H1900 M1450 547.5H1900 M1450 570.2H1900 M1450 593.0H1900 M1450 615.8H1900 M1450 638.5H1900 M1450 661.2H1900" stroke="#ebebeb" stroke-width="1"/><path d="M1450 228.5H1884" stroke="#d8d8d8" stroke-width="1"/><text transform="translate(1485 220.5) scale(0.9 1)" font-family="Liberation Mono" font-size="15" fill="#111" text-anchor="middle">Lay...</text><text transform="translate(1557 220.5) scale(0.9 1)" font-family="Liberation Mono" font-size="15" fill="#111" text-anchor="middle">Color</text><text transform="translate(1652 220.5) scale(0.9 1)" font-family="Liberation Mono" font-size="15" fill="#111" text-anchor="middle">Tool name</text><text transform="translate(1741 220.5) scale(0.9 1)" font-family="Liberation Mono" font-size="15" fill="#111" text-anchor="middle">Vi...</text><text transform="translate(1798 220.5) scale(0.9 1)" font-family="Liberation Mono" font-size="15" fill="#111" text-anchor="middle">Lock</text><text transform="translate(1853 220.5) scale(0.9 1)" font-family="Liberation Mono" font-size="15" fill="#111" text-anchor="middle">Ou...</text><text transform="translate(1490 243.5) scale(0.9 1)" font-family="Liberation Mono" font-size="15" fill="#111" text-anchor="middle">1</text><rect x="1529.5" y="233" width="60" height="17" fill="#ff3c78" stroke="#222" stroke-width="1.2"/><text transform="translate(1652 243.5) scale(0.9 1)" font-family="Liberation Mono" font-size="15" fill="#111" text-anchor="middle">CREASE</text><text transform="translate(1744 243.5) scale(0.9 1)" font-family="Liberation Mono" font-size="15" fill="#111" text-anchor="middle">Y</text><text transform="translate(1800 243.5) scale(0.9 1)" font-family="Liberation Mono" font-size="15" fill="#111" text-anchor="middle">N</text><text transform="translate(1856 243.5) scale(0.9 1)" font-family="Liberation Mono" font-size="15" fill="#111" text-anchor="middle">Y</text><text transform="translate(1490 266.5) scale(0.9 1)" font-family="Liberation Mono" font-size="15" fill="#111" text-anchor="middle">2</text><rect x="1529.5" y="256" width="60" height="17" fill="#ffe400" stroke="#222" stroke-width="1.2"/><text transform="translate(1652 266.5) scale(0.9 1)" font-family="Liberation Mono" font-size="15" fill="#111" text-anchor="middle">EOT</text><text transform="translate(1744 266.5) scale(0.9 1)" font-family="Liberation Mono" font-size="15" fill="#111" text-anchor="middle">Y</text><text transform="translate(1800 266.5) scale(0.9 1)" font-family="Liberation Mono" font-size="15" fill="#111" text-anchor="middle">N</text><text transform="translate(1856 266.5) scale(0.9 1)" font-family="Liberation Mono" font-size="15" fill="#111" text-anchor="middle">Y</text></svg>
<div class="abs" style="left:1917px;top:105px;width:3px;height:903px;background:#f6f6f6"></div>
<svg class="abs" style="left:1440px;top:160px" width="480" height="848" viewBox="1440 160 480 848"><defs><linearGradient id="gSil" x1="0" y1="0" x2="1" y2="0"><stop offset="0" stop-color="#7a7f84"/><stop offset="0.3" stop-color="#e8ecef"/><stop offset="0.5" stop-color="#fdfdfd"/><stop offset="0.75" stop-color="#b4b8bc"/><stop offset="1" stop-color="#6a6e72"/></linearGradient><linearGradient id="gDk" x1="0" y1="0" x2="1" y2="0"><stop offset="0" stop-color="#3a3a36"/><stop offset="0.4" stop-color="#8a8a80"/><stop offset="1" stop-color="#3a3a36"/></linearGradient><linearGradient id="gYl" x1="0" y1="0" x2="1" y2="0"><stop offset="0" stop-color="#a07a18"/><stop offset="0.5" stop-color="#d8a830"/><stop offset="1" stop-color="#9a7010"/></linearGradient><radialGradient id="gGold" cx="0.4" cy="0.3" r="0.75"><stop offset="0" stop-color="#ffe070"/><stop offset="0.6" stop-color="#f0a000"/><stop offset="1" stop-color="#c07000"/></radialGradient><linearGradient id="gGoldV" x1="0" y1="0" x2="0" y2="1"><stop offset="0" stop-color="#ffd040"/><stop offset="1" stop-color="#c08000"/></linearGradient><linearGradient id="gSq" x1="0" y1="0" x2="0" y2="1"><stop offset="0" stop-color="#ffb830"/><stop offset="1" stop-color="#f09010"/></linearGradient></defs><rect x="1464" y="762" width="125" height="175" fill="#367281"/><rect x="1464" y="911.5" width="125" height="25.5" fill="#133a6e"/><rect x="1616" y="762" width="125" height="175" fill="#367281"/><rect x="1616" y="911.5" width="125" height="25.5" fill="#133a6e"/><rect x="1767" y="762" width="125" height="175" fill="#367281"/><rect x="1767" y="911.5" width="125" height="25.5" fill="#133a6e"/><rect x="1526" y="769" width="9" height="8" fill="#555"/><rect x="1523" y="776" width="14" height="18" fill="url(#gSil)"/><rect x="1516" y="793" width="29" height="11" rx="2" fill="url(#gSil)"/><rect x="1518" y="803" width="24.5" height="85" fill="url(#gSil)"/><path d="M1518 870H1542.5" stroke="#777" stroke-width="1"/><rect x="1524.5" y="888" width="11.5" height="8" fill="url(#gSil)"/><path d="M1530 896V911" stroke="#bbb" stroke-width="2"/><rect x="1659.5" y="770.5" width="49" height="15" fill="#c8c8c4"/><rect x="1665" y="774" width="11" height="8" fill="#9aa890"/><rect x="1683" y="774" width="17" height="8" fill="#9aa890"/><rect x="1674" y="789" width="28" height="15" rx="2" fill="#222"/><rect x="1659.5" y="785" width="14.5" height="46" fill="url(#gYl)"/><rect x="1659" y="830" width="21" height="5" fill="#b0b0a8"/><rect x="1660" y="835" width="19.5" height="58" fill="url(#gDk)"/><rect x="1660" y="893" width="19.5" height="15" fill="#2a2a26"/><path d="M1660 897H1679.5M1660 901H1679.5" stroke="#666" stroke-width="1"/><rect x="1824" y="770.5" width="14" height="17" rx="2" fill="#2a2e30"/><rect x="1816" y="787" width="29" height="8" rx="3" fill="#9aa0a4"/><rect x="1816" y="794" width="29" height="80" fill="url(#gSil)"/><rect x="1818.5" y="874" width="23" height="33" rx="3" fill="url(#gSil)"/><circle cx="1815.5" cy="808" r="1.6" fill="#bfe8f0"/><circle cx="1845.5" cy="808" r="1.6" fill="#bfe8f0"/><text x="1527" y="929.5" font-family="Liberation Sans" font-weight="bold" font-size="14.5" fill="#fff" text-anchor="middle" letter-spacing="1">1#MILL</text><text x="1675" y="929.5" font-family="Liberation Sans" font-weight="bold" font-size="14.5" fill="#fff" text-anchor="middle" letter-spacing="1">2#EOT</text><text x="1843" y="929.5" font-family="Liberation Sans" font-weight="bold" font-size="14.5" fill="#fff" text-anchor="middle" letter-spacing="1">3#CREASE</text><circle cx="1487" cy="970.7" r="26.5" fill="url(#gGold)" stroke="#d08a00" stroke-width="1.5"/><circle cx="1487" cy="970.7" r="20" fill="none" stroke="#ffd060" stroke-width="1" opacity="0.6"/><path d="M1481 960L1497 971L1481 982Z" fill="#fff8e0"/><path d="M1543 948H1579L1582 960H1540Z" fill="#a06010"/><path d="M1540 962H1582L1588 988H1534Z" fill="url(#gGoldV)"/><path d="M1534 988H1588V992H1534Z" fill="#806030"/><path d="M1535 978V994M1587 978V994" stroke="#999" stroke-width="1.5"/><path d="M1612.0 944V970" stroke="#e8c030" stroke-width="2.2"/><path d="M1617.5 944V970" stroke="#e8c030" stroke-width="2.2"/><path d="M1623.0 944V970" stroke="#e8c030" stroke-width="2.2"/><path d="M1628.5 944V970" stroke="#e8c030" stroke-width="2.2"/><path d="M1634.0 944V970" stroke="#e8c030" stroke-width="2.2"/><path d="M1639.5 944V970" stroke="#e8c030" stroke-width="2.2"/><path d="M1645.0 944V970" stroke="#e8c030" stroke-width="2.2"/><path d="M1650.5 944V970" stroke="#e8c030" stroke-width="2.2"/><path d="M1656.0 944V970" stroke="#e8c030" stroke-width="2.2"/><rect x="1609" y="966" width="57" height="31" rx="3" fill="url(#gGoldV)"/><rect x="1625" y="962" width="17" height="8" rx="3" fill="#d8a020"/><path d="M1613 972Q1616 976 1613 980Q1610 984 1613 988" stroke="#fff8d0" stroke-width="1.6" fill="none"/><path d="M1619 972Q1622 976 1619 980Q1616 984 1619 988" stroke="#fff8d0" stroke-width="1.6" fill="none"/><path d="M1625 972Q1628 976 1625 980Q1622 984 1625 988" stroke="#fff8d0" stroke-width="1.6" fill="none"/><path d="M1631 972Q1634 976 1631 980Q1628 984 1631 988" stroke="#fff8d0" stroke-width="1.6" fill="none"/><path d="M1637 972Q1640 976 1637 980Q1634 984 1637 988" stroke="#fff8d0" stroke-width="1.6" fill="none"/><path d="M1643 972Q1646 976 1643 980Q1640 984 1643 988" stroke="#fff8d0" stroke-width="1.6" fill="none"/><path d="M1649 972Q1652 976 1649 980Q1646 984 1649 988" stroke="#fff8d0" stroke-width="1.6" fill="none"/><path d="M1655 972Q1658 976 1655 980Q1652 984 1655 988" stroke="#fff8d0" stroke-width="1.6" fill="none"/><path d="M1661 972Q1664 976 1661 980Q1658 984 1661 988" stroke="#fff8d0" stroke-width="1.6" fill="none"/><rect x="1687" y="944" width="52" height="52" fill="url(#gSq)" stroke="#d07a10" stroke-width="1"/><circle cx="1708" cy="980" r="9.5" fill="none" stroke="#a02412" stroke-width="7"/><path d="M1708 955V970" stroke="#3a0a08" stroke-width="4.5"/><path d="M1718 979.5H1736" stroke="#3a0a08" stroke-width="4"/><path d="M1700 959L1708 947L1716 959Z" fill="#3a0a08"/><rect x="1762.5" y="944" width="52" height="52" fill="url(#gSq)" stroke="#d07a10" stroke-width="1"/><rect x="1781" y="952" width="30" height="39" fill="#ffc070"/><rect x="1781.5" y="952.5" width="6" height="5" fill="#a82010"/><rect x="1789.0" y="952.5" width="6" height="5" fill="#a82010"/><rect x="1796.5" y="952.5" width="6" height="5" fill="#a82010"/><rect x="1804.0" y="952.5" width="6" height="5" fill="#a82010"/><rect x="1781.5" y="959.0" width="6" height="5" fill="#a82010"/><rect x="1789.0" y="959.0" width="6" height="5" fill="#a82010"/><rect x="1796.5" y="959.0" width="6" height="5" fill="#a82010"/><rect x="1804.0" y="959.0" width="6" height="5" fill="#a82010"/><rect x="1781.5" y="965.5" width="6" height="5" fill="#a82010"/><rect x="1789.0" y="965.5" width="6" height="5" fill="#a82010"/><rect x="1796.5" y="965.5" width="6" height="5" fill="#a82010"/><rect x="1804.0" y="965.5" width="6" height="5" fill="#a82010"/><rect x="1781.5" y="972.0" width="6" height="5" fill="#a82010"/><rect x="1789.0" y="972.0" width="6" height="5" fill="#a82010"/><rect x="1796.5" y="972.0" width="6" height="5" fill="#a82010"/><rect x="1804.0" y="972.0" width="6" height="5" fill="#a82010"/><rect x="1781.5" y="978.5" width="6" height="5" fill="#a82010"/><rect x="1789.0" y="978.5" width="6" height="5" fill="#a82010"/><rect x="1796.5" y="978.5" width="6" height="5" fill="#a82010"/><rect x="1804.0" y="978.5" width="6" height="5" fill="#a82010"/><rect x="1781.5" y="985.0" width="6" height="5" fill="#a82010"/><rect x="1789.0" y="985.0" width="6" height="5" fill="#a82010"/><rect x="1796.5" y="985.0" width="6" height="5" fill="#a82010"/><rect x="1804.0" y="985.0" width="6" height="5" fill="#a82010"/><path d="M1772 996V962Q1772 955 1776 952" stroke="#3a0a08" stroke-width="5" fill="none"/><path d="M1766 964L1774 948L1782 964Z" fill="#3a0a08"/><path d="M1777 996Q1777 982 1795 980H1812" stroke="#3a0a08" stroke-width="4" fill="none"/><circle cx="1870" cy="970" r="22" fill="none" stroke="url(#gGoldV)" stroke-width="7"/><path d="M1856 956L1884 984" stroke="url(#gGoldV)" stroke-width="7"/><rect x="1661" y="168" width="19" height="20" fill="#f8f8f8"/><path d="M1662 170H1679M1662 174H1679M1662 178H1679M1662 182H1679M1662 186H1677" stroke="#b8b8b8" stroke-width="1.8"/><path d="M1663 170H1678" stroke="#d8d8d8" stroke-width="3"/><path d="M1671 172V188M1662 180H1681" stroke="#90b828" stroke-width="3"/><path d="M1669 186L1672 193L1675 186Z" fill="#333"/><rect x="1698" y="168" width="19" height="20" fill="#f8f8f8"/><path d="M1699 170H1716M1699 174H1716M1699 178H1716M1699 182H1716M1699 186H1714" stroke="#b8b8b8" stroke-width="1.8"/><path d="M1709 172V188M1700 180H1720" stroke="#90b828" stroke-width="3"/><path d="M1707 186L1710 193L1713 186Z" fill="#333"/><rect x="1735" y="168" width="19" height="20" fill="#f8f8f8"/><path d="M1736 170H1753M1736 174H1753M1736 178H1753M1736 182H1753M1736 186H1751" stroke="#b8b8b8" stroke-width="1.8"/><path d="M1741 174L1755 188M1755 174L1741 188" stroke="#f06030" stroke-width="3.2"/><path d="M1745 186L1748 193L1751 186Z" fill="#333"/><rect x="1774" y="168" width="19" height="20" fill="#f8f8f8"/><path d="M1775 170H1792M1775 174H1792M1775 178H1792M1775 182H1792M1775 186H1790" stroke="#b8b8b8" stroke-width="1.8"/><path d="M1789 175L1795 181L1789 187Z" fill="#80b020"/><path d="M1786 186L1789 193L1792 186Z" fill="#333"/><rect x="1812" y="168" width="19" height="20" fill="#f8f8f8"/><path d="M1813 170H1830M1813 174H1830M1813 178H1830M1813 182H1830M1813 186H1828" stroke="#b8b8b8" stroke-width="1.8"/><path d="M1828 175L1834 181L1828 187Z" fill="#80b020"/><path d="M1824 186L1827 193L1830 186Z" fill="#333"/><rect x="1853" y="170" width="19" height="20" fill="#f8f8f8"/><path d="M1854 172H1871M1854 176H1871M1854 180H1871M1854 184H1871M1854 188H1869" stroke="#b8b8b8" stroke-width="1.8"/><path d="M1866 186L1869 193L1872 186Z" fill="#333"/></svg>
<svg class="abs" style="left:1200px;top:670px" width="640" height="110" viewBox="1200 670 640 110"><rect x="1222" y="687" width="22" height="22" fill="#700000" fill-opacity="0.95"/><rect x="1251.5" y="687" width="22" height="22" fill="#700000" fill-opacity="0.95"/><rect x="1281" y="687" width="22" height="22" fill="#700000" fill-opacity="0.95"/><rect x="1222" y="716.5" width="22" height="22" fill="#700000" fill-opacity="0.95"/><rect x="1251.5" y="716.5" width="22" height="22" fill="#700000" fill-opacity="0.95"/><rect x="1281" y="716.5" width="22" height="22" fill="#700000" fill-opacity="0.95"/><rect x="1222" y="746" width="22" height="22" fill="#700000" fill-opacity="0.95"/><rect x="1251.5" y="746" width="22" height="22" fill="#700000" fill-opacity="0.95"/><path d="M1261.5 670V780" stroke="#7070d0" stroke-width="1" stroke-opacity="0.7"/><defs><filter id="thin"><feMorphology operator="erode" radius="0.3"/></filter></defs><text x="1327" y="745" font-family="Liberation Sans" font-size="44.6" letter-spacing="2.8" fill="#5a5a5a" fill-opacity="0.58" filter="url(#thin)">Принтер-Плоттер.ру</text></svg>
<div class="abs" style="left:0;top:1008px;width:1920px;height:1px;background:#8a8a8a"></div><div class="abs" style="left:0;top:1009px;width:1920px;height:2px;background:#f4f4f4"></div>
</body></html>
